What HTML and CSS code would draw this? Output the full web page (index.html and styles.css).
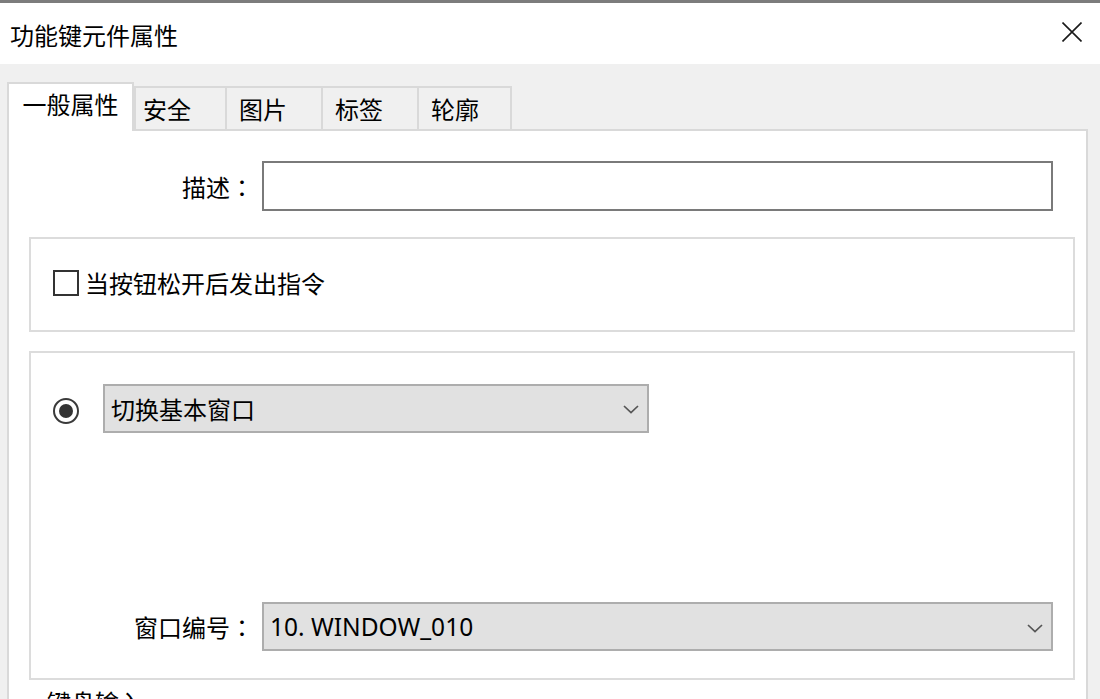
FILE: index.html
```html
<!DOCTYPE html>
<html lang="zh-CN">
<head>
<meta charset="utf-8">
<title>功能键元件属性</title>
<link rel="stylesheet" href="styles.css">
</head>
<body>
<div class="titlebar">
  <span class="title">功能键元件属性</span>
  <span class="close" aria-label="关闭">
    <svg width="20" height="20" viewBox="0 0 20 20"><path d="M0.5 0.5 L19.5 19.5 M19.5 0.5 L0.5 19.5" stroke="#1a1a1a" stroke-width="1.6" fill="none"/></svg>
  </span>
</div>
<div class="dialog">
  <div class="tabs">
    <div class="tab active">一般属性</div>
    <div class="tab tab-safe">安全</div>
    <div class="tab tab-pic">图片</div>
    <div class="tab tab-label">标签</div>
    <div class="tab tab-outline">轮廓</div>
  </div>
  <div class="panel">
    <div class="desc-row">
      <label class="desc-label">描述<span class="colon" lang="ja">：</span></label>
      <div class="textbox"></div>
    </div>
    <div class="group group-check">
      <span class="checkbox"></span>
      <span class="check-text">当按钮松开后发出指令</span>
    </div>
    <div class="group group-action">
      <div class="action-row">
        <span class="radio"><span class="radio-dot"></span></span>
        <div class="select select-action">
          <span>切换基本窗口</span>
          <svg class="chev" width="16" height="9" viewBox="0 0 16 9"><path d="M1 1 L8 7.5 L15 1" stroke="#555" stroke-width="1.7" fill="none"/></svg>
        </div>
      </div>
      <div class="window-row">
        <label class="window-label">窗口编号<span class="colon" lang="ja">：</span></label>
        <div class="select select-window">
          <span class="latin">10. WINDOW_010</span>
          <svg class="chev" width="16" height="9" viewBox="0 0 16 9"><path d="M1 1 L8 7.5 L15 1" stroke="#555" stroke-width="1.7" fill="none"/></svg>
        </div>
      </div>
    </div>
    <div class="next-title">键盘输入</div>
  </div>
</div>
</body>
</html>
```
FILE: styles.css
```css
* { box-sizing: border-box; }
html, body { margin: 0; padding: 0; }
body {
  width: 1100px;
  height: 699px;
  overflow: hidden;
  background: #f0f0f0;
  font-family: "Noto Sans CJK SC", "Noto Sans", sans-serif;
  font-size: 24px;
  color: #000;
}
.titlebar {
  height: 64px;
  border-top: 3px solid #7c7c7c;
  background: #fff;
  display: flex;
  align-items: center;
  justify-content: space-between;
  padding: 2px 18px 0 10px;
}
.title { line-height: 30px; }
.close { display: flex; width: 20px; height: 20px; margin-top: -5px; }

.dialog { padding: 18px 12px 0 7px; }
.tabs {
  display: flex;
  align-items: flex-end;
  height: 47px;
}
.tab {
  height: 43px;
  border: 2px solid #d9d9d9;
  border-bottom: none;
  background: #f0f0f0;
  padding: 6px 0 0 12px;
  line-height: 30px;
  margin-left: -2px;
}
.tab.active {
  width: 127px;
  height: 49px;
  margin: 0 0 -2px 0;
  background: #fff;
  text-align: center;
  padding: 5px 0 0 0;
  position: relative;
  z-index: 1;
}
.tab-safe { width: 93px; margin-left: 0; padding-left: 7px; }
.tab-pic { width: 98px; }
.tab-label { width: 98px; }
.tab-outline { width: 95px; }

.panel {
  background: #fff;
  border: 2px solid #d9d9d9;
  height: 600px;
  padding: 0;
}
.colon { font-family: "Noto Sans CJK JP", "Noto Sans CJK SC", sans-serif; }
.desc-row {
  display: flex;
  align-items: center;
  margin-top: 30px;
  gap: 8px;
}
.desc-label { width: 245px; text-align: right; }
.textbox {
  width: 791px;
  height: 50px;
  border: 2px solid #7a7a7a;
  background: #fff;
}
.group {
  border: 2px solid #dcdcdc;
  margin: 0 11px 0 20px;
}
.group-check {
  margin-top: 26px;
  height: 95px;
  display: flex;
  align-items: center;
  padding-left: 22px;
  padding-bottom: 4px;
}
.checkbox {
  width: 26px;
  height: 26px;
  border: 2px solid #333;
  background: #fff;
  margin-right: 6px;
}
.check-text { line-height: 30px; }

.group-action {
  margin-top: 19px;
  height: 329px;
  padding-top: 31px;
}
.action-row {
  display: flex;
  align-items: center;
  padding-left: 22px;
  gap: 24px;
}
.radio {
  width: 26px;
  height: 26px;
  border: 2px solid #3a3a3a;
  border-radius: 50%;
  display: flex;
  align-items: center;
  justify-content: center;
  margin-top: 5px;
}
.radio-dot {
  width: 14px;
  height: 14px;
  border-radius: 50%;
  background: #333;
}
.select {
  height: 49px;
  background: #e1e1e1;
  border: 2px solid #adadad;
  display: flex;
  align-items: center;
  justify-content: space-between;
  padding: 0 8px 0 6px;
  line-height: 30px;
}
.select-action { width: 546px; }
.select-action .chev { margin-top: 2px; }
.window-row {
  display: flex;
  align-items: center;
  gap: 8px;
  margin-top: 169px;
}
.window-label { width: 223px; text-align: right; }
.select-window { width: 791px; }
.select-window .chev { margin-top: 4px; }
.latin { font-family: "Noto Sans", "Noto Sans CJK SC", sans-serif; font-size: 24.5px; }

.next-title {
  margin: 8px 0 0 38px;
  line-height: 28px;
}
```
